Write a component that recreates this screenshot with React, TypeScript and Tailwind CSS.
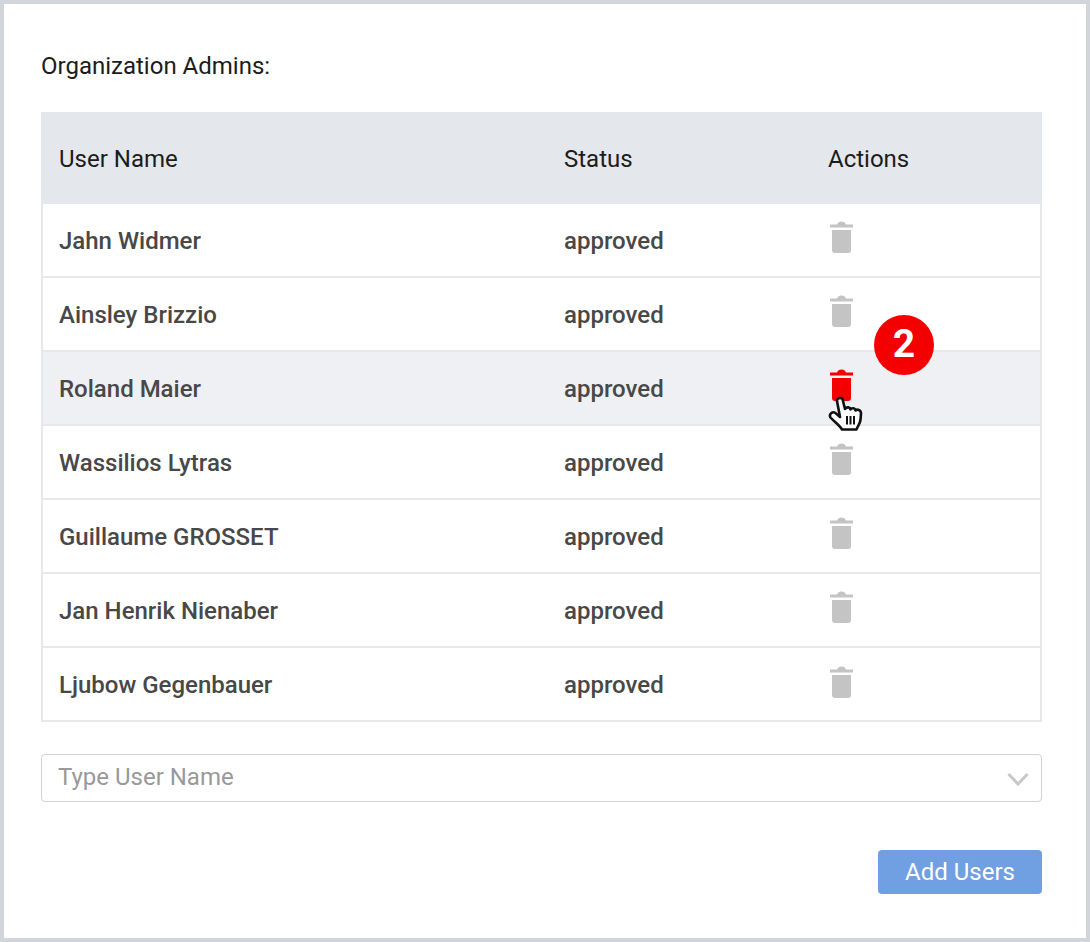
const rows = [
  "Jahn Widmer",
  "Ainsley Brizzio",
  "Roland Maier",
  "Wassilios Lytras",
  "Guillaume GROSSET",
  "Jan Henrik Nienaber",
  "Ljubow Gegenbauer",
];

function Trash({ className }: { className: string }) {
  return (
    <svg width="23" height="33" viewBox="0 0 23 33" className={className} fill="currentColor">
      <path d="M0 4.5 L7 4.5 Q8 1.5 11.5 1.5 Q15 1.5 16 4.5 L23 4.5 L23 7.5 L0 7.5 Z" />
      <path d="M2 10 L21 10 L21 30 Q21 33 18 33 L5 33 Q2 33 2 30 Z" />
    </svg>
  );
}

function Hand() {
  return (
    <svg width="36" height="37" viewBox="0 0 36 37" className="absolute left-[-2px] top-[28px]">
      <path
        d="M9 5 C9 1 15 1 15 5 L17 13 C19 10.5 22 11 22.5 13.5 C24 11.5 27 12 27.5 14.5 C29 13 33 13.5 33 17.5 L32.5 24 C32 28 29.5 30 28.5 33.5 L14 33.5 C11.5 29 6.5 26 2.5 21.5 C0.5 18 5 14.5 8 17.5 L12 21 Z"
        fill="#fff"
        stroke="#111"
        strokeWidth="2.6"
        strokeLinejoin="round"
      />
      <path d="M19 20 V28.5 M22.5 20 V28.5 M26 20 V28.5" stroke="#111" strokeWidth="2" fill="none" />
    </svg>
  );
}

export default function App() {
  return (
    <div className="w-[1090px] h-[942px] border-4 border-[#d2d6da] bg-white px-[37px] font-['Roboto',sans-serif] text-[24px]">
      <h1 className="pt-[44px] h-[108px] text-[24px] leading-[36px] font-normal text-[#1c1c1c]">Organization Admins:</h1>
      <div className="w-[1001px]">
        <div className="flex h-[92px] items-center bg-[#e4e7eb] text-[#1c1c1c]">
          <div className="w-[523px] pl-[18px] pt-[2px]">User Name</div>
          <div className="w-[264px] pt-[2px]">Status</div>
          <div className="pt-[2px]">Actions</div>
        </div>
        <div className="border-x-2 border-b-2 border-[#e6e8ea]">
          {rows.map((name, i) => (
            <div
              key={name}
              className={`flex items-center border-[#e6e8ea] font-medium text-[#484848] ${i < rows.length - 1 ? "h-[74px] border-b-2" : "h-[72px]"} ${i === 2 ? "bg-[#eef0f3]" : "bg-white"}`}
            >
              <div className="w-[521px] pl-[16px] pt-[2px]">{name}</div>
              <div className="w-[266px] pt-[2px]">approved</div>
              <div className={`relative ${i === rows.length - 1 ? "pb-[6px]" : "pb-[8px]"}`}>
                <Trash className={i === 2 ? "text-[#f40000]" : "text-[#c4c4c4]"} />
                {i === 2 && <Hand />}
                {i === 1 && (
                  <div className="absolute left-[44px] top-[21px] z-10 flex h-[60px] w-[60px] items-center justify-center rounded-full bg-[#f40000] text-[39px] font-bold text-white">
                    2
                  </div>
                )}
              </div>
            </div>
          ))}
        </div>
      </div>
      <div className="mt-[32px] flex h-[48px] w-[1001px] items-center justify-between rounded-[4px] border border-[#d2d2d2] pl-[16px] pr-[12px] pb-[2px] text-[#999999]">
        <span>Type User Name</span>
        <svg width="22" height="14" viewBox="0 0 22 14" fill="none" stroke="#c8c8c8" strokeWidth="3" className="mt-[4px]">
          <path d="M1.5 2 L11 12 L20.5 2" />
        </svg>
      </div>
      <div className="mt-[48px] flex w-[1001px] justify-end">
        <button className="h-[44px] w-[164px] rounded-[4px] bg-[#70a0e2] text-white">Add Users</button>
      </div>
    </div>
  );
}
